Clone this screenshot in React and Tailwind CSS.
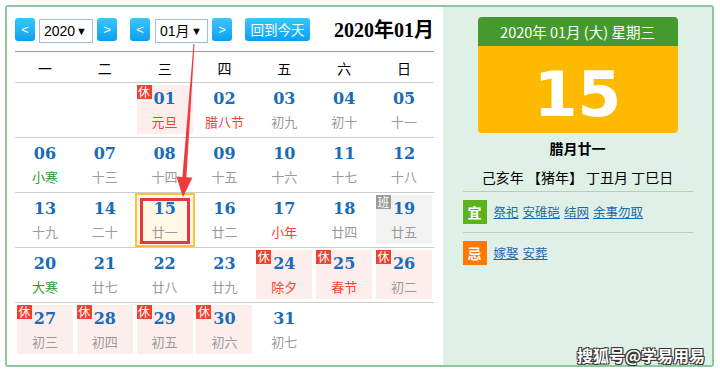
import React from 'react';

const weeks = ['一', '二', '三', '四', '五', '六', '日'];

const rows = [
  [null, null, { d: '01', l: '元旦', c: 'red', rest: true }, { d: '02', l: '腊八节', c: 'red' }, { d: '03', l: '初九' }, { d: '04', l: '初十' }, { d: '05', l: '十一' }],
  [{ d: '06', l: '小寒', c: 'green' }, { d: '07', l: '十三' }, { d: '08', l: '十四' }, { d: '09', l: '十五' }, { d: '10', l: '十六' }, { d: '11', l: '十七' }, { d: '12', l: '十八' }],
  [{ d: '13', l: '十九' }, { d: '14', l: '二十' }, { d: '15', l: '廿一', today: true }, { d: '16', l: '廿二' }, { d: '17', l: '小年', c: 'red' }, { d: '18', l: '廿四' }, { d: '19', l: '廿五', work: true }],
  [{ d: '20', l: '大寒', c: 'green' }, { d: '21', l: '廿七' }, { d: '22', l: '廿八' }, { d: '23', l: '廿九' }, { d: '24', l: '除夕', c: 'red', rest: true }, { d: '25', l: '春节', c: 'red', rest: true }, { d: '26', l: '初二', rest: true }],
  [{ d: '27', l: '初三', rest: true }, { d: '28', l: '初四', rest: true }, { d: '29', l: '初五', rest: true }, { d: '30', l: '初六', rest: true }, { d: '31', l: '初七' }, null, null],
];

const lunarColor = {
  red: 'text-[#f2452a]',
  green: 'text-[#2a9a2a]',
};

const NavBtn = ({ children }) => (
  <div className="w-[20px] h-[23px] rounded-[3px] bg-gradient-to-b from-[#38c6ff] to-[#07a0ee] text-white text-[13px] leading-[23px] text-center font-['Liberation_Sans',sans-serif]">
    {children}
  </div>
);

const Select = ({ value, w }) => (
  <div className={`${w} h-[24px] mt-[1px] border border-[#9cc2d9] bg-white flex items-center justify-between pl-[4px] pr-[5px] text-[14px] text-black font-['Liberation_Sans','Noto_Sans_CJK_SC',sans-serif]`}>
    <span>{value}</span>
    <span className="text-[11px]">▼</span>
  </div>
);

const DayCell = ({ cell }) => {
  if (!cell) return <div className="h-[54px]" />;
  let inner = 'w-[56px] h-[49px]';
  if (cell.rest) inner += ' bg-[#fdeeee]';
  if (cell.work) inner += ' bg-[#f3f3f3]';
  if (cell.today) inner = 'w-[60px] h-[54px] border-2 border-[#fcc43a] bg-[#fff8e6]';
  return (
    <div className={`h-[54px] flex justify-center ${cell.today ? '' : 'pt-[2px]'}`}>
      <div className={`relative flex flex-col items-center ${inner}`}>
        {cell.rest && (
          <span className="absolute top-0 left-0 w-[15px] h-[14px] bg-[#f0412f] text-white text-[12px] leading-[14px] text-center">休</span>
        )}
        {cell.work && (
          <span className="absolute top-0 left-0 w-[15px] h-[14px] bg-[#9a9a9a] text-white text-[12px] leading-[14px] text-center">班</span>
        )}
        <div className="mt-[2px] leading-[24px] text-[16px] font-bold text-[#1a6cb6] font-['DejaVu_Serif',serif]">{cell.d}</div>
        <div className={`mt-[1px] leading-[20px] text-[13px] ${cell.c ? lunarColor[cell.c] : 'text-[#9a9a9a]'}`}>{cell.l}</div>
      </div>
    </div>
  );
};

export default function App() {
  return (
    <div className="relative w-[720px] h-[374px] bg-white pt-[5px] pl-[5px] font-['Noto_Sans_CJK_SC',sans-serif]">
      <div className="w-[709px] h-[362px] border-2 border-[#8fc69c] rounded-[3px] flex overflow-hidden">
        {/* calendar */}
        <div className="w-[436px] bg-white pl-[8px] pr-[9px]">
          <div className="h-[45px] pt-[11px] flex items-start border-b border-[#74aae2]">
            <NavBtn>&lt;</NavBtn>
            <div className="w-[4px]" />
            <Select value="2020" w="w-[54px]" />
            <div className="w-[4px]" />
            <NavBtn>&gt;</NavBtn>
            <div className="w-[13px]" />
            <NavBtn>&lt;</NavBtn>
            <div className="w-[5px]" />
            <Select value="01月" w="w-[53px]" />
            <div className="w-[4px]" />
            <NavBtn>&gt;</NavBtn>
            <div className="w-[13px]" />
            <div className="w-[65px] h-[23px] rounded-[3px] bg-gradient-to-b from-[#38c6ff] to-[#07a0ee] text-white text-[13.5px] leading-[23px] text-center">回到今天</div>
            <div className="ml-auto leading-[24px] text-[20px] font-bold text-black font-['Liberation_Serif','Noto_Sans_CJK_SC',serif]">2020年01月</div>
          </div>
          <div className="grid grid-cols-7 h-[31px] border-b border-[#cccccc] text-[14px] text-black">
            {weeks.map((w) => (
              <div key={w} className="flex items-center justify-center pt-[2px]">{w}</div>
            ))}
          </div>
          {rows.map((r, i) => (
            <div key={i} className={`grid grid-cols-7 ${i < 4 ? 'border-b border-[#cccccc]' : ''}`}>
              {r.map((c, j) => (
                <DayCell key={j} cell={c} />
              ))}
            </div>
          ))}
        </div>

        {/* detail */}
        <div className="flex-1 bg-[#dff1e6] flex flex-col items-center pt-[10px]">
          <div className="w-[200px] rounded-[4px] overflow-hidden">
            <div className="h-[29px] bg-[#449a2d] text-white text-[14.5px] leading-[29px] text-center">2020年 01月 (大) 星期三</div>
            <div className="h-[87px] bg-[#fdba00] text-white text-[63px] font-bold leading-[87px] text-center pt-[5px] font-['DejaVu_Sans',sans-serif]">15</div>
          </div>
          <div className="mt-[5px] text-[14px] font-bold text-black leading-[20px]">腊月廿一</div>
          <div className="mt-[9px] text-[14px] text-black leading-[20px] whitespace-pre">己亥年 【猪年】 丁丑月 丁巳日</div>
          <div className="w-[230px] mt-[4px] border-t border-[#a9d6b6]" />
          <div className="w-[230px] mt-[8px] flex items-center">
            <span className="w-[24px] h-[24px] bg-[#5db31c] text-white text-[14px] font-bold leading-[24px] text-center">宜</span>
            <div className="ml-[7px] flex gap-[4px] text-[12.5px] text-[#1e6aab]">
              <a className="underline">祭祀</a>
              <a className="underline">安碓硙</a>
              <a className="underline">结网</a>
              <a className="underline">余事勿取</a>
            </div>
          </div>
          <div className="w-[230px] mt-[8px] border-t border-[#a9d6b6]" />
          <div className="w-[230px] mt-[8px] flex items-center">
            <span className="w-[24px] h-[24px] bg-[#ff7800] text-white text-[14px] font-bold leading-[24px] text-center">忌</span>
            <div className="ml-[7px] flex gap-[4px] text-[12.5px] text-[#1e6aab]">
              <a className="underline">嫁娶</a>
              <a className="underline">安葬</a>
            </div>
          </div>
        </div>
      </div>

      {/* annotation overlay */}
      <div className="absolute left-[140px] top-[198px] w-[50px] h-[46px] border-[3px] border-[#e8383a] pointer-events-none" />
      <svg className="absolute left-0 top-0 pointer-events-none" width="720" height="374">
        <polygon
          points="193.5,44 194.5,44 186.4,177.2 192.4,177.7 183,197 176.4,176.5 182.4,177"
          fill="#f03b3b"
        />
      </svg>
      <div className="absolute right-[15px] top-[345px] text-[16px] font-bold text-white leading-[20px] [text-shadow:1px_1px_0_#333,-1px_-1px_0_#333,1px_-1px_0_#333,-1px_1px_0_#333]">
        搜狐号@学易用易
      </div>
    </div>
  );
}
